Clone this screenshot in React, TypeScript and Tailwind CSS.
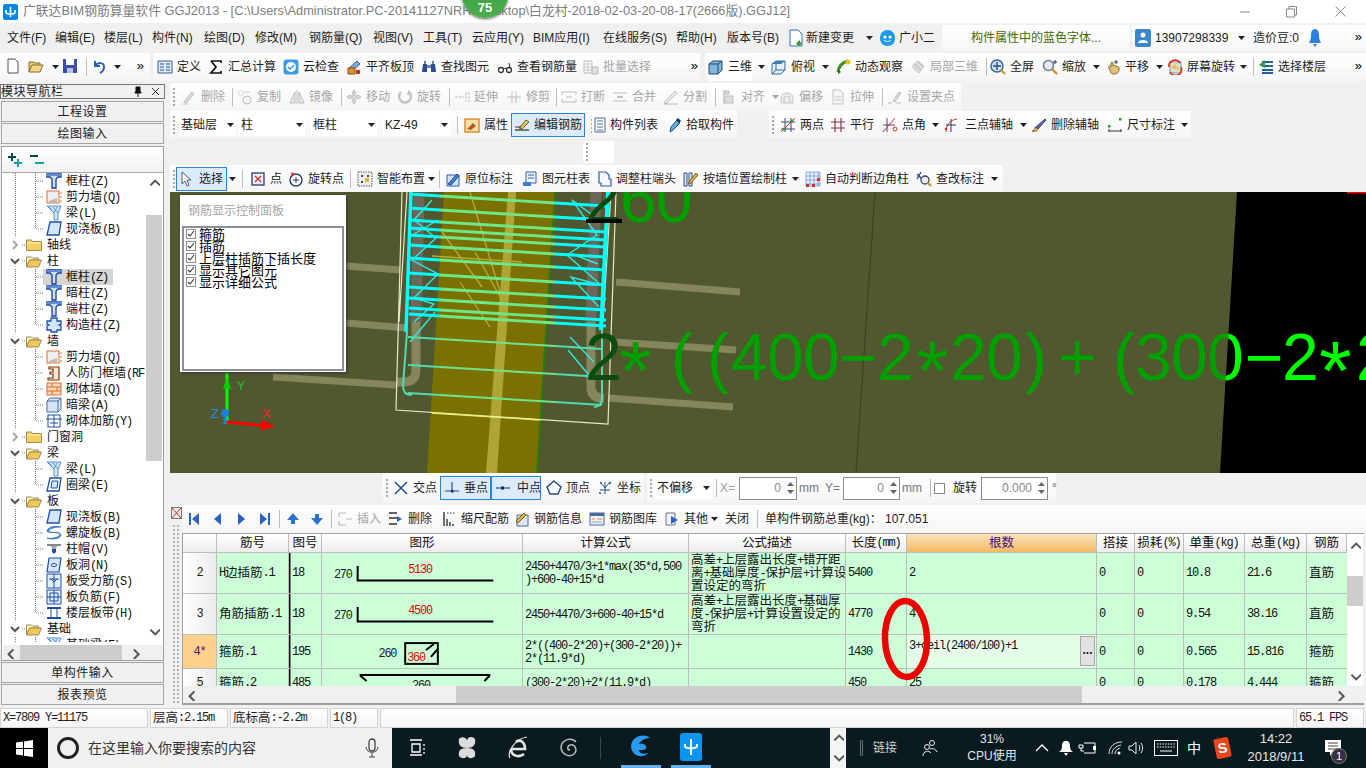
import React from 'react';

const G = (p: { children: React.ReactNode }) => (
  <svg viewBox="0 0 16 16" className="w-4 h-4 shrink-0">{p.children}</svg>
);
const K = '#333';
const B = '#2a62c0';
const icons: Record<string, React.ReactNode> = {
  new: <path d="M3 1h7l3 3v11H3z" fill="#fff" stroke="#555" />,
  open: <><path d="M1 14V4h5l1 1h5v2" fill="#e8c97a" stroke="#8a6a20" /><path d="M1 14l3-7h11l-3 7z" fill="#f2d68c" stroke="#8a6a20" /></>,
  save: <><path d="M1 1h14v14H1z" fill="#3d4fa8" /><path d="M4 1h8v6H4z" fill="#fff" /><path d="M5 10h6v5H5z" fill="#bcc4dc" /></>,
  undo: <path d="M3 3v5h5M3 8c3-4 9-4 9 1 0 3-2 5-4 6" fill="none" stroke="#2a62c0" strokeWidth="2" />,
  def: <><path d="M1 2h14v12H1z" fill="#dfe9f7" stroke="#3c5f96" /><path d="M3 5h4M3 8h4M3 11h4M9 5h4M9 8h4M9 11h4" stroke="#23508f" /></>,
  sigma: <path d="M3 2h10v2M3 2l5 6-5 6h10v-2" fill="none" stroke="#111" strokeWidth="1.7" />,
  cloud: <><rect x="0.5" y="0.5" width="15" height="15" rx="3" fill="#3f9be0" /><circle cx="8" cy="8" r="5" fill="#fff" /><path d="M5 8l2 2 4-4" stroke="#3f9be0" strokeWidth="1.5" fill="none" /></>,
  align: <><path d="M3 9l8-7 3 3-8 7z" fill="#7fa8d8" stroke="#44689c" /><path d="M2 9h7v6H2z" fill="#d8902e" stroke="#8a5314" /><path d="M10 11h4v4h-4z" fill="#b63a20" /></>,
  find: <><path d="M2 5h4v8H1zM10 5h4l1 8h-5z" fill="#2c4a8c" /><path d="M6 6h4v3H6z" fill="#6c84b8" /><path d="M3 2h2v3H3zM11 2h2v3h-2z" fill="#6c84b8" /></>,
  glasses: <><circle cx="4" cy="11" r="2.5" fill="none" stroke={K} strokeWidth="1.3" /><circle cx="12" cy="11" r="2.5" fill="none" stroke={K} strokeWidth="1.3" /><path d="M6 10c1-1 3-1 4 0M13 9l-1-5" stroke={K} fill="none" /></>,
  batch: <><path d="M1 2h8v12H1z" fill="none" stroke="#bbb" /><path d="M1 5h8M1 8h8M1 11h8M5 2v12" stroke="#ccc" /><path d="M9 8h6v7H9z" fill="#ddd" stroke="#bbb" /></>,
  cube: <><path d="M1 5l4-3h9v9l-4 4H1z" fill="#7fb6e0" stroke="#22476e" /><path d="M1 5h9v10M10 5l4-3" fill="none" stroke="#22476e" /></>,
  cubeT: <><path d="M1 5l4-3h9v9l-4 4H1z" fill="#dff0fa" stroke="#3b6a94" /><path d="M5 2v9h9M5 11l-4 4" fill="none" stroke="#3b6a94" /><path d="M5 2h9l-4 3H1z" fill="#3e7cb4" /></>,
  orbit: <><path d="M3 13C4 6 9 3 13 2" fill="none" stroke="#3a8f2a" strokeWidth="3" /><circle cx="13" cy="3" r="2.5" fill="#e7c41e" /><path d="M3 10l3 3-3 2z" fill="#2d6d20" /></>,
  local: <><path d="M3 6l5-4 6 5-5 7-6-5z" fill="#ddd" stroke="#c8c8c8" /><path d="M5 5l6 6M8 3l5 5" stroke="#bbb" /></>,
  full: <><circle cx="7" cy="7" r="6" fill="#cfe0f4" stroke="#335f9a" strokeWidth="1.4" /><path d="M7 3v8M3 7h8" stroke="#274e86" strokeWidth="1.4" /><path d="M11 11l4 4" stroke="#c98a2a" strokeWidth="2" /></>,
  zoom: <><circle cx="6.5" cy="6.5" r="5" fill="#e5edf6" stroke="#6f7f93" strokeWidth="1.6" /><path d="M10 10l5 5" stroke="#c98a2a" strokeWidth="2.2" /><path d="M13 1v4M11 3h4" stroke="#335" /></>,
  pan: <><path d="M4 9c-1-2 1-3 2-1V4c0-1 2-1 2 0v3c1-1 2-1 2 0 1-1 2 0 2 1 1-1 2 0 2 1v2c0 2-2 4-4 4H8c-2 0-3-3-4-6z" fill="#e3c076" stroke="#8a6a30" /><path d="M11 1v4M9 3h4" stroke="#446" /></>,
  screenr: <><rect x="3" y="3" width="11" height="11" fill="#d5e6c8" stroke="#7a9ac0" /><path d="M3 9l5-4 5 6" fill="#e5c565" /><path d="M2 8a6 6 0 0 1 11-4" stroke="#e03020" strokeWidth="1.7" fill="none" /><path d="M14 8a6 6 0 0 1-11 5" stroke="#e03020" strokeWidth="1.7" fill="none" /></>,
  floors: <><path d="M4 3h11M4 7h11M4 11h11M4 14h11" stroke="#1e5fa0" strokeWidth="2" /><path d="M7 1L1 6l6 3z" fill="#2e9a4a" /></>,
  del: <><path d="M3 13l8-10 2 2-8 9z" fill="#ddd" stroke="#bbb" /><path d="M1 15h7" stroke="#ccc" /></>,
  copy: <><circle cx="4" cy="4" r="2.5" fill="none" stroke="#bbb" strokeDasharray="1.5 1" /><circle cx="10" cy="11" r="4" fill="none" stroke="#bbb" /><path d="M7 3h6" stroke="#ccc" /></>,
  mirror: <><path d="M1 14L6 3v11zM15 14L10 3v11z" fill="#e8e8e8" stroke="#bbb" /><path d="M8 1v14" stroke="#bbb" /></>,
  move: <path d="M8 1l2 3H9v3h3V6l3 2-3 2V9H9v3h1l-2 3-2-3h1V9H4v1L1 8l3-2v1h3V4H6z" fill="#ddd" stroke="#bbb" />,
  rot: <path d="M4 3a6 6 0 1 0 8 0l-1 3" fill="none" stroke="#c4c4c4" strokeWidth="2.4" />,
  ext: <path d="M1 8h9M12 3v10M15 3v10" stroke="#bbb" strokeDasharray="3 1" fill="none" />,
  trim: <path d="M1 8h14M6 2v12M10 2v12" stroke="#bbb" fill="none" />,
  brk: <path d="M1 6V3h14v3M1 10v3h14v-3M5 8h6" stroke="#bbb" fill="none" />,
  merge: <path d="M1 4h14M1 12h14M5 7l3 1-3 1M11 7L8 8l3 1" stroke="#bbb" fill="none" />,
  split: <path d="M1 14L12 2l2 2L3 15zM1 15h14" stroke="#bbb" fill="#eee" />,
  alignv: <><path d="M3 1v14" stroke="#aaa" /><path d="M4 7h8v7H4zM4 2h4v3H4z" fill="#ddd" stroke="#bbb" /></>,
  offset: <path d="M2 14V9a6 5 0 0 1 12 0v5zM5 14v-4a3 3 0 0 1 6 0v4" fill="#eee" stroke="#c4c4c4" />,
  stretch: <path d="M3 1h7l3 3v11H3zM5 8h6M5 11h6" fill="#f6f6f6" stroke="#c0c0c0" />,
  grip2: <><path d="M1 14h4M9 14h5" stroke="#bbb" /><path d="M6 12l6-9 2 1-6 9z" fill="#ddd" stroke="#bbb" /></>,
  attr: <><rect x="1" y="2" width="14" height="13" fill="#f4e0a8" stroke="#d57f20" strokeWidth="1.3" /><path d="M3 12l6-6 3 3-5 4z" fill="#b05a20" /></>,
  edit: <><path d="M1 13h14" stroke="#333" strokeWidth="1.3" /><path d="M5 11l7-8 3 2-7 7z" fill="#e0c56a" stroke="#7a5a16" /><path d="M1 10h6" stroke="#333" /></>,
  list: <><path d="M5 1h10v14H5z" fill="#fff" stroke="#4a6a8a" /><path d="M7 4h6M7 7h6M7 10h6M7 13h6" stroke="#4a6a8a" /><path d="M1 3h2M1 7h2M1 11h2M1 15h2" stroke="#4a6a8a" strokeDasharray="1 1" /></>,
  pick: <><path d="M4 15l1-5 6-7 3 3-7 7z" fill="#5fa8dc" stroke="#1f5588" /><path d="M11 2l3 3" stroke="#13355e" strokeWidth="3" /></>,
  twop: <><path d="M1 5h14M1 12h14M5 1v14M11 1v14" stroke="#3c4a78" /><path d="M1 15L15 1" stroke="#d83020" /><circle cx="4" cy="12" r="1.5" fill="#2a9a30" /><circle cx="12" cy="4" r="1.5" fill="#2a9a30" /></>,
  para: <path d="M1 5h14M1 11h14M5 1v14M11 1v14" stroke="#803848" strokeWidth="1.2" />,
  ang: <><path d="M5 1v14M1 8h12" stroke="#3c4a78" /><path d="M1 15L13 1" stroke="#d83020" /><circle cx="13" cy="12" r="2" fill="none" stroke="#d83020" /></>,
  three: <><path d="M3 15C3 8 7 3 14 2" stroke="#d83020" fill="none" /><path d="M8 2v13M3 8h10" stroke="#2c3c6c" /><circle cx="3" cy="12" r="1.3" fill="#d83020" /></>,
  brush: <><path d="M5 10l9-8 1 1-8 9z" fill="#5c6eb0" stroke="#34406e" /><path d="M1 14c2 0 3-2 3-4l3 2c-1 2-3 3-6 2z" fill="#e2b76a" stroke="#846020" /></>,
  dim: <><path d="M2 12v3M14 12v3M2 14h12" stroke="#333" /><rect x="1" y="8" width="2.5" height="2.5" fill="#2a9a30" /><rect x="12" y="1" width="2.5" height="2.5" fill="#2a9a30" /></>,
  arrow: <path d="M3 1v12l3-3 2 5 2-1-2-5h4z" fill="#fff" stroke="#556" />,
  point: <><rect x="2" y="2" width="12" height="12" fill="#eef" stroke="#2a3a6a" strokeWidth="1.3" /><path d="M5 5l6 6M11 5l-6 6" stroke="#d83020" strokeWidth="1.3" /></>,
  rotpt: <><circle cx="8" cy="9" r="6" fill="none" stroke="#2a3a6a" strokeWidth="1.4" /><path d="M8 6v6M5 9h6" stroke="#2a3a6a" /><path d="M3 1l4 2-3 3z" fill="#d83020" /></>,
  smart: <><rect x="1" y="1" width="14" height="14" fill="#f2f2f2" stroke="#555" strokeDasharray="1.5 1" /><path d="M4 4h2v2H4zM10 4h2v2h-2zM4 10h2v2H4z" fill="#2a4a8a" /><path d="M8 7h4v4H8z" fill="#e5b030" /></>,
  orig: <><path d="M2 4h12v11H2z" fill="#cfe2f8" stroke="#2e5ea8" /><path d="M3 13L12 3l2 2-8 9z" fill="#3f7ed0" stroke="#214a8c" /></>,
  ctable: <><path d="M4 1h10v11H4z" fill="#eef4fc" stroke="#2e5ea8" /><path d="M6 4h6M6 7h6" stroke="#2e5ea8" /><path d="M1 11h8v4H1z" fill="#3f7ed0" /></>,
  adj: <path d="M3 1h7l3 3v4h2v7H5v-3H3z" fill="#f4f8fe" stroke="#2e5ea8" strokeWidth="1.2" />,
  wall: <><path d="M1 2h3v13H1zM6 2h3v13H6z" fill="#dde8f6" stroke="#2a4a8a" /><path d="M5 12l8-10 2 2-8 9z" fill="#e2b53a" stroke="#7a5a16" /></>,
  auto: <><path d="M1 1h14v14H1zM1 5h14M1 9h14M1 13h14M5 1v14M9 1v14M13 1v14" fill="#e9f2fc" stroke="#5f8ed0" strokeWidth="0.7" /><path d="M1 13h3v3H1zM7 13h3v3H7zM12 7h3v3h-3z" fill="#d83020" /></>,
  chk: <><path d="M1 3l5 5M5 1L1 8" stroke="#2a4a8a" strokeWidth="1.4" /><circle cx="9" cy="9" r="4" fill="#e7eef8" stroke="#445" strokeWidth="1.3" /><path d="M12 12l3 3" stroke="#c98a2a" strokeWidth="2" /></>,
  cross: <path d="M2 2l12 12M14 2L2 14" stroke="#1f4d90" strokeWidth="1.5" />,
  perp: <><path d="M1 11h14M8 2v9" stroke="#1f4d90" strokeWidth="1.2" /><rect x="7" y="10" width="2.5" height="2.5" fill="#0f2f66" /></>,
  mid: <><path d="M1 8h14" stroke="#3f6fb0" strokeWidth="1.4" /><rect x="6" y="6.5" width="3" height="3" fill="#0f2f66" /></>,
  vertex: <path d="M8 1l7 6-3 7H4L1 7z" fill="#fff" stroke="#1f4d90" strokeWidth="1.4" />,
  coord: <><path d="M8 2v12M3 10h10M4 3l4 5 5-6" stroke="#1f4d90" fill="none" /><circle cx="4" cy="3" r="1" fill="#1f4d90" /><circle cx="13" cy="3" r="1" fill="#1f4d90" /><circle cx="3" cy="13" r="1" fill="#1f4d90" /></>,
  first: <><rect x="3" y="2" width="2" height="12" fill={B} /><path d="M13 2v12L6 8z" fill={B} /></>,
  prev: <path d="M11 2v12L4 8z" fill={B} />,
  next: <path d="M5 2v12l7-6z" fill={B} />,
  last: <><rect x="11" y="2" width="2" height="12" fill={B} /><path d="M3 2v12l7-6z" fill={B} /></>,
  up: <path d="M8 2l6 7h-4v4H6V9H2z" fill="#2a72d0" />,
  down: <path d="M8 14l6-7h-4V3H6v4H2z" fill="#2a72d0" />,
  ins: <path d="M2 2h7M2 2v4M2 10v4h7M9 8h6" stroke="#bbb" fill="none" strokeWidth="1.2" />,
  rem: <><path d="M1 2h8M1 7h8M1 13h8" stroke="#333" strokeWidth="1.5" /><path d="M9 5l5 3-5 3z" fill="#2a62c0" /></>,
  scale: <><path d="M3 1v14M6 8v7M9 11v4M12 13v2" stroke="#333" strokeWidth="1.4" /><path d="M6 2h9" stroke="#333" strokeDasharray="1.5 1.5" /></>,
  info: <><path d="M3 4h11v11H3z" fill="#dce7f5" stroke="#4a6a8a" /><path d="M2 10l8-8 2 2-8 8z" fill="#e2b53a" stroke="#7a5a16" /></>,
  lib: <><rect x="1" y="2" width="14" height="12" fill="#eef2f8" stroke="#4a6a9a" /><path d="M1 2h14v3H1z" fill="#4a6a9a" /><path d="M3 8h3M8 8h5" stroke="#d89030" /><path d="M3 11h10" stroke="#8aa" /></>,
  other: <><path d="M2 2h9v12H2z" fill="#f2f4f8" stroke="#678" /><path d="M7 5l7 4-7 4z" fill="#2a62c0" /></>,
  plus2: <><path d="M5 1v8M1 5h8" stroke="#074c4c" strokeWidth="2" /><path d="M11 7v8M7 11h8" stroke="#0aa2a2" strokeWidth="2" /></>,
  minus2: <><path d="M1 4h8" stroke="#074c4c" strokeWidth="2" /><path d="M6 11h9" stroke="#0aa2a2" strokeWidth="2" /></>,
  tCol: <><path d="M1 1h14v3h-3L10 6v9H6V6L4 4H1z" fill="#cfe0f6" stroke="#153f9a" strokeWidth="1.3" /><path d="M1 1h14v2H1z" fill="#5f8fd8" /></>,
  tWall: <><rect x="1" y="2" width="12" height="12" fill="#eee" stroke="#d8702c" /><path d="M3 12l8-3v4H3z" fill="#bbb" /><path d="M14 4h2M14 8h2M14 12h2" stroke="#d8702c" /></>,
  tBeam: <><path d="M1 1h14l-3 7v7H8V8z" fill="#d8eaf8" stroke="#4f8fd0" /><path d="M3 2l5 6M7 2l5 6M11 2L8 8" stroke="#4f8fd0" /></>,
  tSlab: <path d="M4 1h11l-2 13H1z" fill="#d4e6fa" stroke="#1d4fa8" strokeWidth="1.3" />,
  tSlab2: <><path d="M4 1h11l-2 13H1z" fill="#fff" stroke="#1d4fa8" strokeWidth="1.3" /><path d="M6 4h6l-1 7H5z" fill="#d4e6fa" stroke="#1d4fa8" /></>,
  tCon: <path d="M5 1h6v3h4v3l-2 1 2 1v4h-4v2H5v-2H1V9l2-1-2-1V4h4z" fill="#d4e6fa" stroke="#1d4fa8" strokeWidth="1.3" />,
  tRf: <path d="M3 2h10v13H2v-2h5V9H4V7h3V4H3z" fill="#fbe6d0" stroke="#7a3410" strokeWidth="1.2" />,
  tBrick: <><rect x="1" y="2" width="14" height="12" fill="#f8d8b8" stroke="#d8702c" /><path d="M1 6h14M1 10h14M6 2v4M11 6v4M6 10v4" stroke="#d8702c" /></>,
  tDark: <><path d="M1 4l3-3h11v11l-3 3H1z" fill="#d6e6f8" stroke="#4a6a9a" /><path d="M1 4h11v11M12 4l3-3" stroke="#4a6a9a" fill="none" /></>,
  tRein: <><rect x="2" y="2" width="12" height="12" fill="#fff" stroke="#1d4fa8" /><path d="M0 6h16M8 2v12M4 10h8" stroke="#1d4fa8" /></>,
  tSpiral: <path d="M15 2C8 0 1 3 1 6s13 0 13 3-7 5-13 4c4 2 14 1 14-3S3 9 3 6s8-4 12-4z" fill="#4f9be0" stroke="#1d4fa8" strokeWidth="0.6" />,
  tCap: <><path d="M1 3h14v2H1z" fill="#888" /><path d="M5 5h6l-1 3H6z" fill="#aaa" /><path d="M6 8h4v3l-2 2-2-2z" fill="#1d4fa8" /></>,
  tHole: <><path d="M3 1h12l-2 14H1z" fill="#d4e6fa" stroke="#1d4fa8" strokeWidth="1.2" /><ellipse cx="8" cy="8" rx="2.6" ry="1.5" fill="#fff" stroke="#1d4fa8" /></>,
  tMain: <><rect x="1" y="1" width="14" height="14" fill="#e2eefc" stroke="#1d4fa8" /><path d="M8 1v14M3 6h10M8 9l-3-3M8 9l3-3" stroke="#1d4fa8" fill="none" /></>,
  tNeg: <><rect x="1" y="1" width="14" height="14" fill="#e2eefc" stroke="#1d4fa8" /><path d="M1 8h14M8 1v14M4 4h8v8H4z" stroke="#1d4fa8" fill="none" /></>,
  tBand: <><path d="M1 3h14M1 13h14" stroke="#1d4fa8" strokeWidth="2" /><path d="M5 3v10M11 3v10" stroke="#1d4fa8" /></>,
};
const Ico = ({ n, cls = '' }: { n: string; cls?: string }) => <span className={`inline-flex shrink-0 ${cls}`}><G>{icons[n]}</G></span>;

const Caret = ({ w, cls = '' }: { w: string; cls?: string }) => (
  <div className={`flex items-center justify-center shrink-0 ${w} ${cls}`}>
    <svg width="7" height="4" viewBox="0 0 7 4"><path d="M0 0h7L3.5 4z" fill="#222" /></svg>
  </div>
);
const Sep = ({ w }: { w: string }) => (
  <div className={`flex justify-center items-center h-full shrink-0 ${w}`}><div className="w-px h-[18px] bg-[#bdbdbd]" /></div>
);
const Grip = ({ cls = '' }: { cls?: string }) => (
  <div className={`flex flex-col gap-[2px] shrink-0 w-[2px] ${cls}`}>
    {[0, 1, 2, 3, 4].map(i => <div key={i} className="w-[2px] h-[2px] bg-[#a8a8a8]" />)}
  </div>
);
const Chev = ({ cls = '' }: { cls?: string }) => <div className={`text-[13px] leading-none text-black shrink-0 ${cls}`}>»</div>;

const Item = ({ w, ic, t, gray, cls = '', blue }: { w: string; ic?: string; t?: string; gray?: boolean; cls?: string; blue?: boolean }) => (
  <div className={`flex items-center gap-[4px] shrink-0 whitespace-nowrap ${w} ${gray ? 'text-[#a6a6a6]' : 'text-[#1d1d1d]'} ${blue ? 'border border-[#2a82da] bg-[#dcebf9]' : ''} ${cls}`}>
    {ic && <Ico n={ic} />}
    {t && <span>{t}</span>}
  </div>
);
const Group = ({ children, cls = '' }: { children: React.ReactNode; cls?: string }) => (
  <div className={`flex items-center h-full rounded-[2px] bg-gradient-to-b from-white to-[#f5f5f5] shrink-0 ${cls}`}>{children}</div>
);
const Sel = ({ w, t, cls = '' }: { w: string; t: string; cls?: string }) => (
  <div className={`flex items-center justify-between h-[23px] bg-white pl-[2px] pr-[1px] shrink-0 ${w} ${cls}`}>
    <span>{t}</span><Caret w="w-[9px]" />
  </div>
);

// SimSun-like mixed text: Latin runs are set narrow and monospaced
const M = ({ t }: { t: string }) => (
  <>
    {t.split(/([\x00-\x7f]+)/).map((s, i) =>
      i % 2 ? <span key={i} className="font-['Liberation_Mono',monospace] text-[12px] tracking-[-1.2px]">{s}</span> : <span key={i}>{s}</span>
    )}
  </>
);

const Folder = ({ open }: { open: boolean }) => (
  <svg width="16" height="14" viewBox="0 0 16 14" className="shrink-0">
    {open ? (
      <><path d="M0.5 12V3h5l1 1h6v2H4z" fill="#fff3c8" stroke="#a08a50" /><path d="M0.5 13l3-7h12l-3 7z" fill="#f3c95a" stroke="#a08a50" /></>
    ) : (
      <><path d="M0.5 12.5V2h5l1 1.5h9v9z" fill="#f6cf62" stroke="#a08a50" /><path d="M1 5h14" stroke="#fff2b8" /></>
    )}
  </svg>
);
type TR = { t: string; f?: 'o' | 'c'; ic?: string; sel?: boolean; end?: boolean; noV?: boolean };
const tree: TR[] = [
  { t: '框柱(Z)', ic: 'tCol' }, { t: '剪力墙(Q)', ic: 'tWall' }, { t: '梁(L)', ic: 'tBeam' }, { t: '现浇板(B)', ic: 'tSlab', end: true },
  { t: '轴线', f: 'c' }, { t: '柱', f: 'o' },
  { t: '框柱(Z)', ic: 'tCol', sel: true }, { t: '暗柱(Z)', ic: 'tCol' }, { t: '端柱(Z)', ic: 'tCol' }, { t: '构造柱(Z)', ic: 'tCon', end: true },
  { t: '墙', f: 'o' },
  { t: '剪力墙(Q)', ic: 'tWall' }, { t: '人防门框墙(RF', ic: 'tRf' }, { t: '砌体墙(Q)', ic: 'tBrick' }, { t: '暗梁(A)', ic: 'tDark' }, { t: '砌体加筋(Y)', ic: 'tRein', end: true },
  { t: '门窗洞', f: 'c' }, { t: '梁', f: 'o' },
  { t: '梁(L)', ic: 'tBeam' }, { t: '圈梁(E)', ic: 'tSlab2', end: true },
  { t: '板', f: 'o' },
  { t: '现浇板(B)', ic: 'tSlab' }, { t: '螺旋板(B)', ic: 'tSpiral' }, { t: '柱帽(V)', ic: 'tCap' }, { t: '板洞(N)', ic: 'tHole' }, { t: '板受力筋(S)', ic: 'tMain' }, { t: '板负筋(F)', ic: 'tNeg' }, { t: '楼层板带(H)', ic: 'tBand', end: true },
  { t: '基础', f: 'o' },
  { t: '基础梁(F)', ic: 'tBeam' },
];
const TreeRow = ({ r }: { r: TR }) => {
  if (r.f) {
    return (
      <div className="flex items-center h-4">
        <svg width="23" height="16" viewBox="0 0 23 16" className="shrink-0">
          {r.f === 'c'
            ? <path d="M10 4l4 4-4 4" fill="none" stroke="#aaa" strokeWidth="2" />
            : <path d="M8 6l4 4 4-4" fill="none" stroke="#555" strokeWidth="2" />}
          <path d="M19 8h4" stroke="#777" strokeDasharray="1 1" />
        </svg>
        <Folder open={r.f === 'o'} />
        <span className="ml-[5px]"><M t={r.t} /></span>
      </div>
    );
  }
  return (
    <div className="flex items-center h-4">
      <svg width="40" height="16" viewBox="0 0 40 16" className="shrink-0">
        <path d="M12.5 0v16" stroke="#777" strokeDasharray="1 1" />
        <path d={r.end ? 'M32.5 0v8' : 'M32.5 0v16'} stroke="#777" strokeDasharray="1 1" />
        <path d="M33 8h7" stroke="#777" strokeDasharray="1 1" />
      </svg>
      <div className={`flex items-center h-4 pl-[3px] pr-[5px] ${r.sel ? 'bg-[#d6d6d6]' : ''}`}>
        <Ico n={r.ic!} />
        <span className="ml-[4px] whitespace-nowrap"><M t={r.t} /></span>
      </div>
    </div>
  );
};

const NavBtn = ({ t, cls = '' }: { t: string; cls?: string }) => (
  <div className={`h-[21px] flex items-center justify-center bg-[#f0f0f0] border border-[#a6a6a6] text-[#222] tracking-[0.5px] text-[12px] ${cls}`}>{t}</div>
);

const Arrow = ({ d, cls = '' }: { d: 'u' | 'd' | 'l' | 'r'; cls?: string }) => {
  const p = { u: 'M2 7l4-4 4 4', d: 'M2 3l4 4 4-4', l: 'M7 2L3 6l4 4', r: 'M4 2l4 4-4 4' }[d];
  return <svg width="12" height="12" viewBox="0 0 10 10" className={`shrink-0 ${cls}`}><path d={p} fill="none" stroke="#555" strokeWidth="1.7" /></svg>;
};

const LeftPanel = () => (
  <div className="w-[165px] h-full flex flex-col pl-[1px] shrink-0">
    <div className="h-[15px] flex items-center justify-between border border-[#777] bg-[#f0f0f0] text-[12px] pr-[4px] tracking-[0.5px] mt-[1px] ml-[-1px]">
      <span>模块导航栏</span>
      <span className="flex items-center gap-[8px]">
        <svg width="10" height="11" viewBox="0 0 10 11"><path d="M3 1h4v5h1v1H2V6h1zM5 7v4" stroke="#111" fill="#111" /></svg>
        <svg width="9" height="9" viewBox="0 0 9 9"><path d="M1 1l7 7M8 1L1 8" stroke="#333" /></svg>
      </span>
    </div>
    <NavBtn t="工程设置" cls="mt-[2px] mr-[1px]" />
    <NavBtn t="绘图输入" cls="mt-px mr-[1px]" />
    <div className="mt-[2px] h-[515px] mr-[1px] flex flex-col border border-[#a0a0a0] bg-white">
      <div className="h-[26px] flex items-center gap-[6px] pl-[5px] bg-gradient-to-b from-white to-[#f2f2f2] border-b border-[#a6a6a6] shrink-0">
        <Ico n="plus2" /><Ico n="minus2" />
      </div>
      <div className="flex flex-1 min-h-0 ml-[1px]">
        <div className="w-[143px] h-[469px] overflow-hidden text-[12px] text-[#111] shrink-0">
          {tree.map((r, i) => <TreeRow key={i} r={r} />)}
        </div>
        <div className="w-[16px] h-[469px] flex flex-col items-center bg-white">
          <Arrow d="u" cls="mt-[4px]" />
          <div className="w-full h-[246px] bg-[#cdcdcd] mt-[26px]" />
          <div className="flex-1" />
          <Arrow d="d" cls="mb-[4px]" />
        </div>
      </div>
      <div className="h-[15px] flex items-center bg-[#f0f0f0] shrink-0 ml-[1px]">
        <Arrow d="l" cls="ml-[2px]" />
        <div className="ml-[3px] w-[102px] h-full bg-[#cdcdcd]" />
        <Arrow d="r" cls="ml-[7px]" />
      </div>
    </div>
    <NavBtn t="单构件输入" cls="mt-[1px] mr-[1px]" />
    <NavBtn t="报表预览" cls="mt-px mr-[1px]" />
  </div>
);

const AX = '0 0 1196 281';
const lines = [2, 16, 28, 36, 43, 53, 66, 81, 95, 106, 116, 122];
const lowLines = [145, 173, 201];
const glyphX = '501 537 561 597 633 669 707 780 816 855 888 943 965 1001 1037 1075 1112 1186';
const glyphT = '((400−2' + '20)+(300−2' + '2';
const Canvas = () => (
  <div className="relative h-[281px] w-[1196px] bg-[#51572f] overflow-hidden shrink-0">
    <svg viewBox={AX} width="1196" height="281" className="block font-['Liberation_Sans',sans-serif]">
      <defs>
        <clipPath id="onOlive"><path d="M0 0H1067L1050 281H0z" /></clipPath>
        <clipPath id="onBlack"><path d="M1067 0H1196V281H1050z" /></clipPath>
      </defs>
      <path d="M1067 0H1196V281H1050z" fill="#000" />
      <path d="M1177 0h19v1.5h-19z" fill="#f00" />
      <path d="M705 0L686 281" stroke="#3c4126" strokeWidth="1.2" />
      <path d="M176 74L230 78M446 90L570 100M176 131L237 136M444 150L566 158M103 185L226 193M438 206L563 215" stroke="#85865c" strokeWidth="7" />
      <path d="M274 0H385L367 281H257z" fill="#7b7100" />
      <path d="M338 0h8L327 281H316z" fill="#aea534" />
      <path d="M300 0l30 100M272 40l40 55M305 60l28 50M290 90l30 45M262 64l90 6" stroke="#b7ab3a" strokeWidth="1.3" />
      <path d="M385 0L367 281" stroke="#2a7a14" strokeWidth="2" />
      <path d="M249 0L246 130" stroke="#6c675a" strokeWidth="11" />
      <path d="M426 0L421 130" stroke="#6c675a" strokeWidth="11" />
      <path d="M246 130V178Q246 190 234 190L226 190" fill="none" stroke="#85865c" strokeWidth="9" />
      <path d="M421 130V195Q421 206 434 207" fill="none" stroke="#85865c" strokeWidth="9" />
      <path d="M232 0L226 218L438 232L446 0M237 0L229 130M441 0L433 130" fill="none" stroke="#e4eac4" strokeWidth="1.2" />
      <path d="M262 221L370 228" stroke="#f0ee70" strokeWidth="1.3" />
      <path d="M262 8l-18 20 22 18-24 22 26 14-24 24 20 6-20 18M432 30l-30-22 25 35-30 20 34 30-30-8 28 30M240 150l25-30M398 158l25 30M400 145l24 25M268 28l-24 14M428 72l-26-10" fill="none" stroke="#2fe8e0" strokeWidth="1.4" />
      {lines.map(y => (
        <g key={y} strokeWidth="2.8">
          <path d={`M239 ${y}L270 ${y + 2}`} stroke="#00ffff" />
          <path d={`M270 ${y + 2}L385 ${y + 9}`} stroke="#6ee886" />
          <path d={`M385 ${y + 9}L436 ${y + 12}`} stroke="#00ffff" />
        </g>
      ))}
      {lowLines.map(y => (
        <g key={y} strokeWidth="2">
          <path d={`M238 ${y}L270 ${y + 2}`} stroke="#4fdcb0" />
          <path d={`M270 ${y + 2}L385 ${y + 9}`} stroke="#6ee48a" />
          <path d={`M385 ${y + 9}L432 ${y + 12}`} stroke="#4fdcb0" />
        </g>
      ))}
      <path d="M241 0L236 140" stroke="#00ffff" strokeWidth="3.5" />
      <path d="M438 0L431 138" stroke="#00ffff" strokeWidth="4" />
      <path d="M237 140L233 194Q233 203 242 203M432 138V205Q432 215 424 215" fill="none" stroke="#4fdcb0" strokeWidth="2" />

      <text x="450 486" y="30" fontSize="66" fill="#00a000">60</text>
      <text x="415" y="30" fontSize="66" fill="#0a4a10">2</text>
      <path d="M416 27h36v4h-36z" fill="#000" />
      <text x="415" y="188" fontSize="66" fill="#0b4d10">2</text>
      <text x={glyphX} y="188" fontSize="66" fill="#00a000" clipPath="url(#onOlive)">{glyphT}</text>
      <text x={glyphX} y="188" fontSize="66" fill="#00ff00" clipPath="url(#onBlack)">{glyphT}</text>
      <text x="449 746" y="208" fontSize="84" fill="#00a000">**</text>
      <text x="1149" y="208" fontSize="84" fill="#00ff00">*</text>

      <path d="M57 176V232" stroke="#00ff00" strokeWidth="3" />
      <path d="M53 197l4-12 4 12z" fill="#00d000" />
      <path d="M55 230l44 4" stroke="#ff0000" strokeWidth="3" />
      <path d="M91 228l14 6-14 5z" fill="#ff0000" />
      <circle cx="55" cy="221" r="4" fill="#1a80e0" />
      <path d="M55 222v10" stroke="#1a80e0" strokeWidth="3" />
      <text x="67" y="198" fontSize="12" fill="#27c427">Y</text>
      <text x="41" y="226" fontSize="13" fill="#2a86e8">Z</text>
      <text x="92" y="226" fontSize="13" fill="#ff2020">X</text>
    </svg>
    <div className="absolute left-[10px] top-[3px] w-[166px] h-[177px] bg-white shadow-[1px_1px_3px_#333] flex flex-col">
      <div className="h-[31px] flex items-center pl-[8px] text-[12px] text-[#a5a5a5]">钢筋显示控制面板</div>
      <div className="flex-1 mx-[2px] mb-[1px] border-2 border-[#8a8f99] pl-[2px] text-[13px] text-black">
        {['箍筋', '插筋', '上层柱插筋下插长度', '显示其它图元', '显示详细公式'].map(t => (
          <div key={t} className="flex items-center h-[12px] gap-[3px] whitespace-nowrap">
            <div className="w-[10px] h-[10px] border border-[#8c8c8c] bg-white flex items-center justify-center shrink-0">
              <svg width="8" height="8" viewBox="0 0 8 8"><path d="M1 4l2 2 4-5" fill="none" stroke="#333" strokeWidth="1.1" /></svg>
            </div>
            <span>{t}</span>
          </div>
        ))}
      </div>
    </div>
  </div>
);

const Spin = ({ w, v, cls = '' }: { w: string; v: string; cls?: string }) => (
  <div className={`flex items-center justify-end h-[23px] border border-[#8d8d8d] bg-white pr-[2px] shrink-0 text-[#8a8a8a] ${w} ${cls}`}>
    <span className="mr-[6px]">{v}</span>
    <div className="flex flex-col gap-[4px]">
      <svg width="7" height="4" viewBox="0 0 7 4"><path d="M0 4h7L3.5 0z" fill="#666" /></svg>
      <svg width="7" height="4" viewBox="0 0 7 4"><path d="M0 0h7L3.5 4z" fill="#666" /></svg>
    </div>
  </div>
);

const cols = 'grid grid-cols-[34px_72px_33px_201px_166px_157px_61px_190px_38px_49px_61px_62px_40px]';
const Hd = ({ t, on }: { t: string; on?: boolean }) => (
  <div className={`flex items-center justify-center border-r border-b border-[#bdbdbd] overflow-hidden whitespace-nowrap ${on ? 'bg-gradient-to-b from-[#fbe3b8] to-[#f3ba62] text-[#4b0a8a]' : 'bg-gradient-to-b from-white to-[#ededed] text-[#111]'}`}><M t={t} /></div>
);
const Cell = ({ children, cls = '' }: { children?: React.ReactNode; cls?: string }) => (
  <div className={`flex items-center pl-[2px] bg-[#ccffd8] border-r border-b border-[#bdbdbd] overflow-hidden whitespace-nowrap leading-[12px] text-[#111] ${cls}`}>{children}</div>
);
const RowH = ({ t, on }: { t: string; on?: boolean }) => (
  <div className={`flex items-center justify-center border-r border-b border-[#bdbdbd] ${on ? 'bg-[#fdd08c] text-[#4b0a8a]' : 'bg-gradient-to-r from-white to-[#ececec]'}`}><M t={t} /></div>
);
const Ll = ({ v }: { v: string }) => (
  <svg width="200" height="40" viewBox="0 0 200 40" className="font-['Liberation_Mono',monospace]">
    <text x="10" y="25" fontSize="12" letterSpacing="-1.2" fill="#222">270</text>
    <path d="M34 13V27.5H171" fill="none" stroke="#000" strokeWidth="2" />
    <text x="97" y="20" textAnchor="middle" fontSize="12" letterSpacing="-1.2" fill="#e60000">{v}</text>
  </svg>
);
const Data = ({ h, no, name, tu, shape, calc, desc, len, gen, single, total, kind, on }: any) => (
  <div className={`${cols} ${h} shrink-0`}>
    <RowH t={no} on={on} />
    <Cell><M t={name} /></Cell>
    <Cell cls="pl-[3px] shadow-[inset_1.5px_0_0_#111]"><M t={tu} /></Cell>
    <Cell cls="pl-0">{shape}</Cell>
    <Cell><div>{calc.map((l: string) => <div key={l}><M t={l} /></div>)}</div></Cell>
    <Cell><div>{desc.map((l: string) => <div key={l}><M t={l} /></div>)}</div></Cell>
    <Cell cls="pl-[2px]"><M t={len} /></Cell>
    {on ? (
      <Cell cls="pl-[1px] bg-[#e4fde9] items-start justify-between pr-[1px] pt-[1px]">
        <span className="mt-[3px]"><M t={gen} /></span>
        <div className="w-[15px] h-[30px] bg-[#e2e2e2] border border-[#a8a8a8] flex items-center justify-center font-bold text-[12px] leading-none pb-[3px]">...</div>
      </Cell>
    ) : <Cell><M t={gen} /></Cell>}
    <Cell><M t="0" /></Cell>
    <Cell><M t="0" /></Cell>
    <Cell cls="pl-[2px]"><M t={single} /></Cell>
    <Cell cls="pl-[2px]"><M t={total} /></Cell>
    <Cell cls="pl-[2px] border-r-0">{kind}</Cell>
  </div>
);

const Table = () => (
  <div className="relative h-[172px] border-l border-t border-b-2 border-[#a0a0a0] bg-[#f0f0f0] flex flex-col overflow-hidden text-[12.5px] w-[1182px] shrink-0">
    <div className="flex flex-1 min-h-0">
      <div className="w-[1164px] flex flex-col shrink-0">
        <div className={`${cols} h-[19px] shrink-0`}>
          <Hd t="" /><Hd t="筋号" /><Hd t="图号" /><Hd t="图形" /><Hd t="计算公式" /><Hd t="公式描述" /><Hd t="长度(mm)" /><Hd t="根数" on /><Hd t="搭接" /><Hd t="损耗(%)" /><Hd t="单重(kg)" /><Hd t="总重(kg)" /><Hd t="钢筋" />
        </div>
        <Data h="h-[41px]" no="2" name="H边插筋.1" tu="18" shape={<Ll v="5130" />} calc={['2450+4470/3+1*max(35*d,500', ')+600-40+15*d']} desc={['高差+上层露出长度+错开距', '离+基础厚度-保护层+计算设', '置设定的弯折']} len="5400" gen="2" single="10.8" total="21.6" kind="直筋" />
        <Data h="h-[41px]" no="3" name="角筋插筋.1" tu="18" shape={<Ll v="4500" />} calc={['2450+4470/3+600-40+15*d']} desc={['高差+上层露出长度+基础厚', '度-保护层+计算设置设定的', '弯折']} len="4770" gen="4" single="9.54" total="38.16" kind="直筋" />
        <Data on h="h-[34px]" no="4*" name="箍筋.1" tu="195" shape={
          <svg width="200" height="33" viewBox="0 0 200 33" className="font-['Liberation_Mono',monospace]">
            <text x="55" y="22" fontSize="12" letterSpacing="-1.2" fill="#222">260</text>
            <rect x="82" y="8" width="33" height="21" fill="none" stroke="#000" strokeWidth="2" />
            <path d="M103 15l8-6M108 22l7-8" stroke="#000" strokeWidth="2" />
            <text x="84" y="26" fontSize="12" letterSpacing="-1.2" fill="#e60000">360</text>
          </svg>
        } calc={['2*((400-2*20)+(300-2*20))+', '2*(11.9*d)']} desc={[]} len="1430" gen="3+ceil(2400/100)+1" single="0.565" total="15.816" kind="箍筋" />
        <Data h="h-[28px]" no="5" name="箍筋.2" tu="485" shape={
          <svg width="200" height="28" viewBox="0 0 200 28" className="font-['Liberation_Mono',monospace]">
            <path d="M43 12l-6-5V6h130v1l-5 5" fill="none" stroke="#000" strokeWidth="2" />
            <text x="98" y="20" textAnchor="middle" fontSize="12" letterSpacing="-1.2" fill="#222">260</text>
          </svg>
        } calc={['(300-2*20)+2*(11.9*d)']} desc={[]} len="450" gen="25" single="0.178" total="4.444" kind="箍筋" />
      </div>
      <div className="w-[16px] flex flex-col items-center bg-white">
        <Arrow d="u" cls="mt-[6px]" />
        <div className="w-full h-[30px] bg-[#cdcdcd] mt-[24px]" />
        <div className="flex-1" />
        <Arrow d="d" cls="mb-[3px]" />
      </div>
    </div>
    <div className="h-[17px] flex items-center bg-[#f0f0f0] shrink-0">
      <Arrow d="l" cls="ml-[3px]" />
      <div className="ml-[258px] w-[626px] h-full bg-[#cdcdcd]" />
      <div className="flex-1" />
      <Arrow d="r" cls="mr-[18px]" />
    </div>
    <svg width="52" height="86" viewBox="0 0 52 86" className="absolute left-[697px] top-[62px]">
      <ellipse cx="26" cy="43" rx="21" ry="38" fill="none" stroke="#ef0000" strokeWidth="6.5" transform="rotate(-2 26 43)" />
    </svg>
  </div>
);

const StatusCell = ({ w, children }: { w: string; children?: React.ReactNode }) => (
  <div className={`h-full flex items-center pl-[2px] border border-[#d4d4d4] bg-gradient-to-b from-white to-[#f4f4f4] text-[12.5px] shrink-0 ${w}`}>{children}</div>
);

const Tray = ({ w, cls = '', children }: { w: string; cls?: string; children: React.ReactNode }) => (
  <div className={`flex items-center justify-center shrink-0 h-full ${w} ${cls}`}>{children}</div>
);
const Taskbar = () => (
  <div className="h-[40px] flex items-center bg-[#0a1b20] text-[#e6e6e6] shrink-0">
    <div className="w-[48px] h-full bg-black flex items-center justify-center shrink-0">
      <svg width="17" height="17" viewBox="0 0 17 17"><path d="M0 2.5L7 1.5V8H0zM8 1.4L17 0V8H8zM0 9h7v6.5L0 14.5zM8 9h9v8l-9-1.3z" fill="#fff" /></svg>
    </div>
    <div className="w-[344px] h-full bg-[#f0f0f0] flex items-center shrink-0 text-[#333] text-[14px]">
      <div className="ml-[9px] w-[22px] h-[22px] rounded-full border-[3px] border-[#222] shrink-0" />
      <span className="ml-[9px]">在这里输入你要搜索的内容</span>
      <div className="flex-1" />
      <svg width="14" height="20" viewBox="0 0 14 20" className="mr-[13px]"><rect x="4" y="1" width="6" height="12" rx="3" fill="none" stroke="#444" strokeWidth="1.3" /><path d="M1 9c0 7 12 7 12 0M7 15v4M4 19h6" fill="none" stroke="#444" /></svg>
    </div>
    <Tray w="w-[50px]"><svg width="16" height="18" viewBox="0 0 16 18"><path d="M1 1h12M1 16h12M3 5h8v8H3zM15 5v2M15 9v2M15 13v2" stroke="#fff" fill="none" strokeWidth="1.3" /></svg></Tray>
    <Tray w="w-[50px]"><svg width="22" height="24" viewBox="0 0 22 24"><path d="M11 12C4 12 2 8 3 3c2-3 8-2 8 2 0-5 6-5 8-2 1 5-1 9-8 9zM11 12c7 0 9 3 8 8-2 3-8 3-8-1 0 4-6 4-8 1-1-5 1-8 8-8z" fill="#dcdcdc" /></svg></Tray>
    <Tray w="w-[54px]"><svg width="24" height="26" viewBox="0 0 24 26"><path d="M4 14h14c0-8-6-10-9-7M4 14c0 7 8 9 13 5" fill="none" stroke="#e6e6e6" strokeWidth="2.6" /><path d="M3 23C0 18 7 4 20 2" fill="none" stroke="#e6e6e6" strokeWidth="1.2" /></svg></Tray>
    <Tray w="w-[46px]"><svg width="20" height="22" viewBox="0 0 20 22"><path d="M17 5C13 0 3 2 2 10c0 7 8 11 13 7 4-4 1-10-4-9-3 1-3 5 0 5" fill="none" stroke="#bbb" strokeWidth="1.5" /></svg></Tray>
    <div className="w-px h-[22px] bg-[#3a474b] shrink-0 ml-[8px] mr-[20px]" />
    <div className="w-[40px] h-full flex flex-col items-center justify-center relative shrink-0 border-b-[3px] border-[#66b0f0]">
      <svg width="24" height="26" viewBox="0 0 24 26"><path d="M21 4C15-1 3 2 2 12c0 9 11 14 17 7-5 2-9 0-9-3 3 0 5 0 7-1 1-5-3-6-7-5 2-4 7-6 11-6z" fill="#2a9af0" /></svg>
    </div>
    <div className="w-[40px] h-full flex items-center justify-center ml-[10px] shrink-0 border-b-[3px] border-[#66b0f0]">
      <div className="w-[22px] h-[28px] rounded-[3px] bg-[#0a96f0] flex items-center justify-center">
        <svg width="16" height="18" viewBox="0 0 16 18"><path d="M8 1v16M2 6v2c0 3 12 3 12 0V6" fill="none" stroke="#fff" strokeWidth="2" /></svg>
      </div>
    </div>
    <div className="w-[119px] shrink-0" />
    <div className="w-[16px] h-full bg-[#f4f4f4] flex flex-col items-center justify-center gap-[8px] shrink-0"><Arrow d="u" /><Arrow d="d" /></div>
    <div className="w-[14px] shrink-0" />
    <div className="w-[3px] h-[16px] border-x border-[#67727a] shrink-0" />
    <span className="ml-[10px] text-[12px] text-[#cfcfcf] w-[24px] whitespace-nowrap shrink-0">链接</span>
    <Tray w="w-[66px]"><svg width="16" height="18" viewBox="0 0 16 18"><circle cx="10" cy="4" r="2.5" fill="none" stroke="#eee" /><circle cx="5" cy="8" r="2.5" fill="none" stroke="#eee" /><path d="M1 17c0-5 6-6 8-3M8 10c3-1 6 0 7 3" fill="none" stroke="#eee" /></svg></Tray>
    <div className="w-[58px] flex flex-col items-center text-[12px] leading-[17px] shrink-0"><span>31%</span><span className="whitespace-nowrap">CPU使用</span></div>
    <Tray w="w-[34px]" cls="ml-[4px]"><svg width="14" height="8" viewBox="0 0 14 8"><path d="M1 7l6-6 6 6" fill="none" stroke="#fff" strokeWidth="1.3" /></svg></Tray>
    <Tray w="w-[14px]"><svg width="14" height="16" viewBox="0 0 14 16"><path d="M7 1c3 0 4 2 4 5 0 3 1 5 3 6H0c2-1 3-3 3-6 0-3 1-5 4-5zM5 13h4l-2 3z" fill="#fff" /></svg></Tray>
    <Tray w="w-[28px]"><svg width="18" height="12" viewBox="0 0 18 12"><path d="M6 1h11v10H6M1 3h4v3H1zM3 6v3h3" fill="none" stroke="#fff" /><path d="M15 4h3v4h-3z" fill="#fff" /></svg></Tray>
    <Tray w="w-[20px]" cls="ml-[5px]"><svg width="16" height="14" viewBox="0 0 16 14"><path d="M1 13c0-7 5-12 13-12M4 13c0-5 4-8 9-9M7 13c0-3 2-5 5-6" fill="none" stroke="#ddd" /><circle cx="11" cy="12" r="1.5" fill="#fff" /></svg></Tray>
    <Tray w="w-[20px]"><svg width="16" height="14" viewBox="0 0 16 14"><path d="M1 5h3l4-4v12L4 9H1zM11 4c1 2 1 4 0 6M13 2c2 3 2 7 0 10" fill="none" stroke="#eee" /></svg></Tray>
    <Tray w="w-[40px]"><svg width="24" height="16" viewBox="0 0 24 16"><rect x="0.5" y="0.5" width="23" height="15" fill="none" stroke="#fff" /><path d="M3 4h18M3 7h18" stroke="#fff" strokeDasharray="1.5 1.2" /><path d="M6 11h12" stroke="#fff" /></svg></Tray>
    <Tray w="w-[16px]"><span className="text-[14px] text-white">中</span></Tray>
    <Tray w="w-[40px]"><div className="w-[15px] h-[20px] bg-[#e8461e] rounded-[2px] flex items-center justify-center text-white text-[14px] leading-none font-bold -rotate-12">S</div></Tray>
    <div className="w-[68px] flex flex-col items-center text-[13px] leading-[18px] shrink-0"><span>14:22</span><span>2018/9/11</span></div>
    <div className="relative w-[46px] h-full flex items-center justify-center shrink-0">
      <svg width="16" height="16" viewBox="0 0 16 16"><path d="M0 0h16v12H8l-3 4v-4H0z" fill="#fff" /><path d="M3 3h10M3 6h10M3 9h10" stroke="#444" /></svg>
      <div className="absolute left-[21px] top-[20px] w-[16px] h-[16px] rounded-full bg-[#333] border border-[#777] text-[11px] leading-[14px] text-center text-white">1</div>
    </div>
  </div>
);

export default function App() {
  return (
    <div className="relative w-[1366px] h-[768px] overflow-hidden bg-[#f0f0f0] flex flex-col font-['Liberation_Sans','Noto_Sans_CJK_SC',sans-serif] text-[12px] leading-none text-[#1d1d1d]">
      {/* title */}
      <div className="h-[23px] bg-white flex items-center shrink-0">
        <div className="ml-[3px] w-[15px] h-[16px] rounded-[2px] bg-[#0a86e8] flex items-center justify-center shrink-0">
          <svg width="11" height="12" viewBox="0 0 11 12"><path d="M5.500 1v10M1 4v2c0 3 9 3 9 0V4" fill="none" stroke="#fff" strokeWidth="1.6" /></svg>
        </div>
        <span className="ml-[5px] text-[12.8px] text-[#7d7d7d] whitespace-nowrap">广联达BIM钢筋算量软件 GGJ2013 - [C:\Users\Administrator.PC-20141127NRHI\Desktop\白龙村-2018-02-03-20-08-17(2666版).GGJ12]</span>
        <div className="flex-1" />
        <svg width="10" height="2" viewBox="0 0 10 2" className="mr-[36px]"><path d="M0 1h10" stroke="#888" /></svg>
        <svg width="11" height="12" viewBox="0 0 11 12" className="mr-[38px]"><path d="M0.5 3h8v8h-8zM3 3V0.5h7.5V9H8.5" fill="none" stroke="#888" /></svg>
        <svg width="11" height="11" viewBox="0 0 11 11" className="mr-[20px]"><path d="M0.5 0.5l10 10M10.500 0.5l-10 10" stroke="#888" /></svg>
      </div>
      <div className="absolute left-[462px] top-[-28px] w-[46px] h-[46px] rounded-full bg-gradient-to-b from-[#2f9a3a] to-[#4cae4c] shadow-[0_1px_3px_#555] flex items-end justify-center pb-[4px] text-white text-[13px] font-bold">75</div>

      {/* menu */}
      <div className="h-[30px] flex items-center shrink-0 pl-[7px] text-[12px] text-[#1d1d1d]">
        {([['文件(F)', 'w-[48px]'], ['编辑(E)', 'w-[49px]'], ['楼层(L)', 'w-[48px]'], ['构件(N)', 'w-[52px]'], ['绘图(D)', 'w-[51px]'], ['修改(M)', 'w-[54px]'], ['钢筋量(Q)', 'w-[64px]'], ['视图(V)', 'w-[50px]'], ['工具(T)', 'w-[49px]'], ['云应用(Y)', 'w-[61px]'], ['BIM应用(I)', 'w-[70px]'], ['在线服务(S)', 'w-[73px]'], ['帮助(H)', 'w-[51px]'], ['版本号(B)', 'w-[62px]']] as const).map(([t, w]) => (
          <div key={t} className={`${w} shrink-0 whitespace-nowrap`}>{t}</div>
        ))}
        <svg width="14" height="18" viewBox="0 0 14 18" className="shrink-0 mr-[3px]"><path d="M1 1h8l4 4v12H1z" fill="#fff" stroke="#2a72c0" /><path d="M7 15l3-4 3 4-3 2z" fill="#3a9a30" /></svg>
        <span className="w-[58px] shrink-0 whitespace-nowrap">新建变更</span>
        <Caret w="w-[10px]" cls="mr-[5px]" />
        <svg width="17" height="18" viewBox="0 0 17 18" className="shrink-0 mr-[3px]"><path d="M8.500 1c4 0 7.500 3 7.500 8s-3 8-7.500 8S1 14 1 9s3.500-8 7.500-8z" fill="#1f9ae8" /><circle cx="6" cy="8" r="1.5" fill="#fff" /><circle cx="11" cy="8" r="1.5" fill="#fff" /><path d="M5 11c2 2 5 2 7 0" stroke="#fff" fill="none" /></svg>
        <span className="w-[43px] shrink-0 whitespace-nowrap">广小二</span>
        <div className="w-[188px] h-[26px] rounded-[2px] bg-gradient-to-b from-white to-[#f6f6f6] flex items-center justify-center text-[#3d6d0a] shrink-0 whitespace-nowrap">构件属性中的蓝色字体...</div>
        <div className="ml-[2px] flex items-center h-[26px] flex-1 pl-[3px] bg-gradient-to-b from-white to-[#f6f6f6]">
          <div className="w-[16px] h-[18px] rounded-[2px] bg-[#3a86d0] flex items-center justify-center shrink-0">
            <svg width="10" height="12" viewBox="0 0 10 12"><circle cx="5" cy="3" r="2.500" fill="#fff" /><path d="M0 11c0-4 10-4 10 0z" fill="#fff" /></svg>
          </div>
          <span className="ml-[4px] w-[82px] shrink-0">13907298339</span>
          <Caret w="w-[9px]" cls="mr-[7px]" />
          <span className="w-[56px] shrink-0 whitespace-nowrap">造价豆:0</span>
          <svg width="12" height="18" viewBox="0 0 12 18" className="shrink-0"><path d="M6 0c3 0 4 3 4 7 0 3 1 5 2 7H0c1-2 2-4 2-7 0-4 1-7 4-7zM4 15h4l-2 3z" fill="#2a82e0" /></svg>
          <div className="flex-1" />
          <Chev cls="mr-[4px] mb-[4px]" />
        </div>
      </div>

      {/* toolbar 1 */}
      <div className="h-[28px] mb-[2px] flex items-center shrink-0">
        <Group cls="w-[150px] pl-[5px]">
          <div className="w-[23px] shrink-0"><Ico n="new" /></div>
          <div className="w-[20px] shrink-0"><Ico n="open" /></div>
          <Caret w="w-[14px]" />
          <div className="w-[20px] shrink-0"><Ico n="save" /></div>
          <Sep w="w-[8px]" />
          <div className="w-[20px] shrink-0 pl-[2px]"><Ico n="undo" /></div>
          <Caret w="w-[14px]" />
          <div className="flex-1" /><Chev cls="mr-[6px] mb-[4px]" />
        </Group>
        <Group cls="ml-[3px] w-[547px] pl-[4px]">
          <Item w="w-[51px]" ic="def" t="定义" />
          <Item w="w-[75px]" ic="sigma" t="汇总计算" />
          <Item w="w-[63px]" ic="cloud" t="云检查" />
          <Item w="w-[75px]" ic="align" t="平齐板顶" />
          <Item w="w-[76px]" ic="find" t="查找图元" />
          <Item w="w-[86px]" ic="glasses" t="查看钢筋量" />
          <Item w="w-[70px]" ic="batch" t="批量选择" gray />
          <div className="flex-1" /><Chev cls="mr-[2px] mb-[4px]" />
        </Group>
        <Group cls="ml-[5px] flex-1 pl-[3px]">
          <Item w="w-[44px] bg-white h-full" ic="cube" t="三维" cls="gap-[2px]" />
          <Caret w="w-[19px]" />
          <Item w="w-[45px]" ic="cubeT" t="俯视" cls="gap-[2px]" />
          <Caret w="w-[19px]" />
          <Item w="w-[75px]" ic="orbit" t="动态观察" />
          <Item w="w-[72px]" ic="local" t="局部三维" gray />
          <Sep w="w-[8px]" />
          <Item w="w-[52px]" ic="full" t="全屏" />
          <Item w="w-[46px]" ic="zoom" t="缩放" />
          <Caret w="w-[17px]" />
          <Item w="w-[47px]" ic="pan" t="平移" />
          <Caret w="w-[15px]" />
          <Item w="w-[71px]" ic="screenr" t="屏幕旋转" />
          <Caret w="w-[10px]" />
          <Sep w="w-[10px]" />
          <Item w="w-[72px]" ic="floors" t="选择楼层" />
          <div className="flex-1" /><Chev cls="mr-[4px] mb-[4px]" />
        </Group>
      </div>

      {/* main */}
      <div className="h-[625px] flex shrink-0">
        <LeftPanel />
        <div className="flex-1 flex flex-col pl-[5px] min-w-0">
          <div className="h-[28px] flex items-center shrink-0">
            <Group cls="w-[791px] pl-[3px]">
              <Grip cls="mr-[6px]" />
              <Item w="w-[47px]" ic="del" t="删除" gray />
              <Sep w="w-[9px]" />
              <Item w="w-[52px]" ic="copy" t="复制" gray />
              <Item w="w-[47px]" ic="mirror" t="镜像" gray />
              <Sep w="w-[10px]" />
              <Item w="w-[51px]" ic="move" t="移动" gray />
              <Item w="w-[47px]" ic="rot" t="旋转" gray />
              <Sep w="w-[10px]" />
              <Item w="w-[52px]" ic="ext" t="延伸" gray />
              <Item w="w-[45px]" ic="trim" t="修剪" gray />
              <Sep w="w-[10px]" />
              <Item w="w-[51px]" ic="brk" t="打断" gray />
              <Item w="w-[51px]" ic="merge" t="合并" gray />
              <Item w="w-[47px]" ic="split" t="分割" gray />
              <Sep w="w-[11px]" />
              <Item w="w-[50px]" ic="alignv" t="对齐" gray />
              <Caret w="w-[8px]" cls="opacity-40" />
              <Item w="w-[51px]" ic="offset" t="偏移" gray />
              <Item w="w-[48px]" ic="stretch" t="拉伸" gray />
              <Sep w="w-[9px]" />
              <Item w="w-[70px]" ic="grip2" t="设置夹点" gray />
            </Group>
          </div>
          <div className="h-[27px] flex items-center shrink-0">
            <Group cls="w-[567px] pl-[3px]">
              <Grip cls="mr-[4px]" />
              <Sel w="w-[57px]" t="基础层" />
              <Sel w="w-[66px]" t="柱" cls="ml-[3px]" />
              <Sel w="w-[66px]" t="框柱" cls="ml-[6px]" />
              <Sel w="w-[67px]" t="KZ-49" cls="ml-[6px]" />
              <Sep w="w-[14px]" />
              <Item w="w-[47px]" ic="attr" t="属性" />
              <Item w="w-[74px]" ic="edit" t="编辑钢筋" cls="h-[24px] pl-[2px]" blue />
              <Item w="w-[76px] ml-[5px]" ic="list" t="构件列表" />
              <Item w="w-[71px]" ic="pick" t="拾取构件" />
            </Group>
            <Group cls="ml-[32px] w-[422px] pl-[3px]">
              <Grip cls="mr-[6px]" />
              <Item w="w-[50px]" ic="twop" t="两点" />
              <Item w="w-[52px]" ic="para" t="平行" />
              <Item w="w-[46px]" ic="ang" t="点角" />
              <Caret w="w-[15px]" />
              <Item w="w-[73px]" ic="three" t="三点辅轴" cls="gap-[6px]" />
              <Caret w="w-[15px]" />
              <Item w="w-[76px]" ic="brush" t="删除辅轴" />
              <Item w="w-[71px]" ic="dim" t="尺寸标注" />
              <Caret w="w-[13px]" />
            </Group>
          </div>
          <div className="h-[27px] flex items-center shrink-0">
            <div className="ml-[413px] w-[31px] h-[22px] rounded-[2px] bg-white flex items-center pl-[3px]"><Grip /></div>
          </div>
          <div className="h-[27px] flex items-center shrink-0">
            <Group cls="w-[833px] pl-[3px]">
              <Grip cls="mr-[1px]" />
              <Item w="w-[51px]" ic="arrow" t="选择" cls="h-[24px] pl-[2px] gap-[2px]" blue />
              <Caret w="w-[11px]" />
              <Sep w="w-[9px]" />
              <Item w="w-[38px] ml-[3px]" ic="point" t="点" />
              <Item w="w-[58px]" ic="rotpt" t="旋转点" />
              <Sep w="w-[8px]" />
              <Item w="w-[70px] ml-[3px]" ic="smart" t="智能布置" />
              <Caret w="w-[8px]" />
              <Sep w="w-[8px]" />
              <Item w="w-[77px] ml-[2px]" ic="orig" t="原位标注" />
              <Item w="w-[74px]" ic="ctable" t="图元柱表" cls="gap-[2px]" />
              <Item w="w-[87px]" ic="adj" t="调整柱端头" cls="gap-[3px]" />
              <Item w="w-[106px]" ic="wall" t="按墙位置绘制柱" />
              <Caret w="w-[12px]" />
              <Item w="w-[111px] ml-[4px]" ic="auto" t="自动判断边角柱" />
              <Item w="w-[72px]" ic="chk" t="查改标注" />
              <Caret w="w-[13px]" />
            </Group>
          </div>
          <Canvas />
          <div className="h-[30px] flex items-center shrink-0 ml-[212px]">
            <Group cls="w-[262px] pl-[4px]">
              <Grip cls="mr-[5px]" />
              <Item w="w-[47px]" ic="cross" t="交点" />
              <Item w="w-[51px]" ic="perp" t="垂点" cls="h-[24px] pl-[3px] gap-[2px]" blue />
              <Item w="w-[50px]" ic="mid" t="中点" cls="h-[24px] pl-[3px] gap-[6px]" blue />
              <Item w="w-[51px] ml-[5px]" ic="vertex" t="顶点" />
              <Item w="w-[47px]" ic="coord" t="坐标" />
            </Group>
            <Group cls="ml-[3px] w-[409px] pl-[3px]">
              <Grip cls="mr-[3px]" />
              <Sel w="w-[57px]" t="不偏移" />
              <Sep w="w-[8px]" />
              <span className="w-[19px] shrink-0 text-[#a0a0a0]">X=</span>
              <Spin w="w-[58px]" v="0" />
              <span className="w-[26px] ml-[2px] shrink-0 text-[#777]">mm</span>
              <span className="w-[18px] shrink-0 text-[#777]">Y=</span>
              <Spin w="w-[57px]" v="0" />
              <span className="w-[24px] ml-[2px] shrink-0 text-[#777]">mm</span>
              <Sep w="w-[8px]" />
              <div className="w-[11px] h-[11px] border border-[#888] bg-white shrink-0" />
              <span className="ml-[8px] w-[28px] shrink-0">旋转</span>
              <Spin w="w-[67px]" v="0.000" />
              <span className="ml-[4px] text-[#555]">°</span>
            </Group>
          </div>
          <div className="flex h-[203px] mt-[2px] shrink-0">
            <div className="w-[12px] flex flex-col items-center shrink-0">
              <svg width="11" height="12" viewBox="0 0 11 12" className="mt-[2px] shrink-0"><rect x="0.5" y="0.5" width="10" height="11" fill="#e9e9e9" stroke="#777" /><path d="M1 1l9 10M10 1L1 11" stroke="#b33" /></svg>
              <div className="mt-[5px] w-[9px] h-[180px] bg-[radial-gradient(#b4b4b4_1px,transparent_1px)] bg-[length:4px_4px]" />
            </div>
            <div className="flex flex-col w-[1184px] shrink-0">
              <div className="h-[28px] flex items-center bg-gradient-to-b from-white to-[#f5f5f5] shrink-0">
                {['first', 'prev', 'next', 'last'].map((n, i) => (
                  <div key={n} className={`flex justify-center shrink-0 ${i === 0 || i === 3 ? 'w-[24px]' : 'w-[23.5px]'}`}><Ico n={n} /></div>
                ))}
                <Sep w="w-[4px]" />
                <div className="w-[24px] flex justify-center shrink-0"><Ico n="up" /></div>
                <div className="w-[23px] flex justify-center shrink-0"><Ico n="down" /></div>
                <Sep w="w-[6px]" />
                <Item w="w-[51px] ml-[3px]" ic="ins" t="插入" gray />
                <Item w="w-[53px]" ic="rem" t="删除" />
                <Item w="w-[73px]" ic="scale" t="缩尺配筋" />
                <Item w="w-[75px]" ic="info" t="钢筋信息" />
                <Item w="w-[75px]" ic="lib" t="钢筋图库" />
                <Item w="w-[47px]" ic="other" t="其他" />
                <Caret w="w-[7px]" />
                <span className="ml-[7px] w-[28px] shrink-0">关闭</span>
                <Sep w="w-[8px]" />
                <span className="ml-[4px] whitespace-nowrap">单构件钢筋总重(kg)： 107.051</span>
              </div>
              <Table />
            </div>
          </div>
        </div>
      </div>

      {/* status */}
      <div className="h-[20px] flex items-center shrink-0 gap-[2px] bg-[#efefef]">
        <StatusCell w="w-[148px]"><M t="X=7809 Y=11175" /></StatusCell>
        <StatusCell w="w-[78px]"><M t="层高:2.15m" /></StatusCell>
        <StatusCell w="w-[98px]"><M t="底标高:-2.2m" /></StatusCell>
        <StatusCell w="w-[48px]"><M t="1(8)" /></StatusCell>
        <StatusCell w="w-[914px]" />
        <StatusCell w="w-[68px]"><M t="65.1 FPS" /></StatusCell>
      </div>
      <Taskbar />
    </div>
  );
}
